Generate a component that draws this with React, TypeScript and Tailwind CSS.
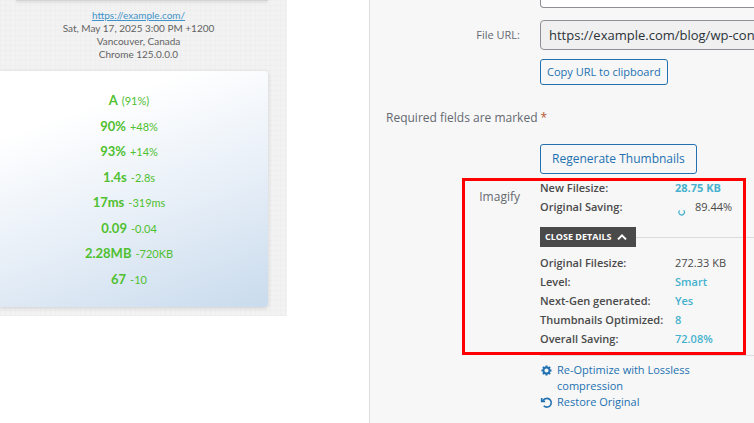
import type { ReactNode } from "react";

interface Metric {
  value: string;
  change: string;
}

const metrics: Metric[] = [
  { value: "A", change: "(91%)" },
  { value: "90%", change: "+48%" },
  { value: "93%", change: "+14%" },
  { value: "1.4s", change: "-2.8s" },
  { value: "17ms", change: "-319ms" },
  { value: "0.09", change: "-0.04" },
  { value: "2.28MB", change: "-720KB" },
  { value: "67", change: "-10" },
];

function ReportPanel() {
  return (
    <section className="w-[287px] shrink-0 self-start overflow-hidden bg-[#f2f2f2] bg-[linear-gradient(#00000003_1px,transparent_1px),linear-gradient(90deg,#00000003_1px,transparent_1px)] bg-[length:5px_5px] pb-[9px] font-['Lato',sans-serif]">
      {/* Bottom edge of the card above */}
      <div className="mr-[19px] ml-4 h-px bg-[#d4d4d4] shadow-[0_1px_3px_#00000033]" />
      <div className="mt-2 ml-[-10px] text-center text-[10px] leading-[13px] text-[#636363]">
        <a href="https://example.com/" className="block text-[#3f93c9] underline">
          https://example.com/
        </a>
        <p>Sat, May 17, 2025 3:00 PM +1200</p>
        <p>Vancouver, Canada</p>
        <p>Chrome 125.0.0.0</p>
      </div>
      <ul className="mt-[10px] mr-[19px] flex h-[236px] flex-col rounded-r bg-[linear-gradient(160deg,#ffffff_20%,#e6eef7_60%,#c9dbed)] pt-[17px] pr-[10px] pb-[15px] text-center text-[#4fc02f] shadow-[0_1px_4px_#00000026]">
        {metrics.map((m) => (
          <li key={m.value} className="flex flex-1 items-baseline justify-center gap-1 text-[13px] leading-[25px] font-bold">
            {m.value} <span className="text-[11px] font-normal">{m.change}</span>
          </li>
        ))}
      </ul>
    </section>
  );
}

function Row({ label, children }: { label: string; children: ReactNode }) {
  return (
    <div className="flex h-[19px] items-center">
      <dt className="w-[135px] shrink-0 font-semibold">{label}</dt>
      <dd>{children}</dd>
    </div>
  );
}

function GearIcon() {
  return (
    <svg viewBox="0 0 24 24" className="size-[11px] shrink-0" fill="none" stroke="currentColor">
      <circle cx="12" cy="12" r="6.5" strokeWidth="4" />
      <g strokeWidth="4.5">
        <path d="M12 1v4M12 19v4M1 12h4M19 12h4M4.2 4.2l3 3M16.8 16.8l3 3M4.2 19.8l3-3M16.8 7.2l3-3" />
      </g>
    </svg>
  );
}

function RestoreIcon() {
  return (
    <svg viewBox="0 0 24 24" className="size-[11px] shrink-0 overflow-visible" fill="none" stroke="currentColor" strokeWidth="3.6">
      <path d="M3.5 8.5C6 4.500 9 3 13 3a9.500 9.500 0 1 1-7 16" />
      <path d="M1.500 2v7.500H9" />
    </svg>
  );
}

function AttachmentDetails() {
  return (
    <section className="min-w-0 flex-1 overflow-hidden border-l border-[#dcdcde] bg-[#f7f7f7] pl-4 font-['Open_Sans',sans-serif]">
      <div className="grid grid-cols-[134px_minmax(0,1fr)] gap-x-5 text-[#646970]">
        <div className="col-start-2 -mr-2 h-2 rounded-b border border-t-0 border-[#8c8f94] bg-white" />
        <label htmlFor="file-url" className="mt-3 text-right text-[11px] leading-[30px]">
          File URL:
        </label>
        <div>
          <input
            id="file-url"
            readOnly
            value="https://example.com/blog/wp-content/uploads/image.png"
            className="mt-3 block h-[30px] w-[300px] rounded border border-[#8c8f94] bg-[#f0f0f1] px-2 text-[13px] text-[#2c3338]"
          />
          <button className="mt-[9px] block h-[26px] rounded-[3px] border border-[#2271b1] px-[6px] text-[11px] whitespace-nowrap text-[#2271b1]">
            Copy URL to clipboard
          </button>
        </div>
      </div>

      <p className="mt-6 text-xs leading-[18px] text-[#646970]">
        Required fields are marked <span className="text-[#b8562f]">*</span>
      </p>

      <div className="mt-[17px] grid grid-cols-[134px_minmax(0,1fr)] gap-x-5">
        <button className="col-start-2 h-[30px] justify-self-start rounded-[3px] border border-[#2271b1] px-[11px] text-xs whitespace-nowrap text-[#2271b1]">
          Regenerate Thumbnails
        </button>
      </div>

      <div className="relative mt-1 grid grid-cols-[134px_minmax(0,1fr)] gap-x-5">
        <div className="pointer-events-none absolute top-0 left-[76px] h-[177px] w-[284px] border-3 border-[#ff0000]" />
        <h3 className="mt-[10px] text-right text-xs leading-[18px] text-[#646970]">Imagify</h3>
        <div className="text-[11px] text-[#4a4a4a]">
          <dl className="pt-px">
            <Row label="New Filesize:">
              <span className="font-bold text-[#46b1ce]">28.75 KB</span>
            </Row>
            <Row label="Original Saving:">
              <span className="flex items-center gap-[9px]">
                <svg viewBox="0 0 10 10" className="mt-2 ml-[3px] size-2" fill="none" stroke="#46b1ce" strokeWidth="1.5">
                  <path d="M2 3a3.4 3.4 0 1 0 5-.2" />
                </svg>
                89.44%
              </span>
            </Row>
          </dl>
          <div className="mt-[10px] flex items-center">
            <button className="flex h-5 items-center gap-[6px] bg-[#4a4a4a] pr-[9px] pl-[5px] text-[9px] font-bold whitespace-nowrap text-white">
              CLOSE DETAILS
              <svg viewBox="0 0 10 6" className="h-[6px] w-[10px]" fill="none" stroke="currentColor" strokeWidth="2">
                <path d="M1 5.4L5 1.4l4 4" />
              </svg>
            </button>
            <span className="h-px flex-1 bg-[#dcdcdc]" />
          </div>
          <dl className="border-b border-[#dcdcdc] pt-[7px] pb-[6px]">
            <Row label="Original Filesize:">272.33 KB</Row>
            <Row label="Level:">
              <span className="font-semibold text-[#46b1ce]">Smart</span>
            </Row>
            <Row label="Next-Gen generated:">
              <span className="font-semibold text-[#46b1ce]">Yes</span>
            </Row>
            <Row label="Thumbnails Optimized:">
              <span className="font-semibold text-[#46b1ce]">8</span>
            </Row>
            <Row label="Overall Saving:">
              <span className="font-semibold text-[#46b1ce]">72.08%</span>
            </Row>
          </dl>
          <div className="mt-[6px] w-[170px] pl-px leading-4 font-medium text-[#2271b1]">
            <a href="#reoptimize" className="flex items-start gap-[5px]">
              <span className="pt-[3px]"><GearIcon /></span>
              <span>Re-Optimize with Lossless compression</span>
            </a>
            <a href="#restore" className="flex items-start gap-[5px]">
              <span className="pt-[3px]"><RestoreIcon /></span>
              <span>Restore Original</span>
            </a>
          </div>
        </div>
      </div>
    </section>
  );
}

export default function App() {
  return (
    <main className="flex min-h-screen gap-[82px] overflow-hidden bg-white">
      <ReportPanel />
      <AttachmentDetails />
    </main>
  );
}
